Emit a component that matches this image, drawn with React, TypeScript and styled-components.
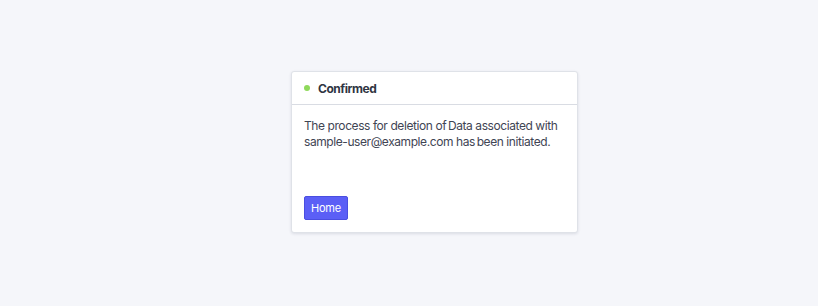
import React from "react";
import styled, { createGlobalStyle } from "styled-components";

const Global = createGlobalStyle`
  html, body { margin: 0; padding: 0; background: #f5f6fa; }
  body { font-family: Inter, "Noto Sans", sans-serif; }
`;

const Page = styled.div`
  height: 306px;
  display: flex;
  align-items: flex-start;
  padding: 71px 0 0 291px;
  box-sizing: border-box;
`;

const Card = styled.div`
  width: 287px;
  height: 162px;
  box-sizing: border-box;
  background: #fff;
  border: 1px solid #dfe2e8;
  border-radius: 3px;
  box-shadow: 0 1px 3px rgba(30, 40, 70, 0.12);
  display: flex;
  flex-direction: column;
`;

const Header = styled.div`
  height: 32px;
  display: flex;
  align-items: center;
  gap: 8px;
  padding-left: 12px;
  border-bottom: 1px solid #d9dce3;
`;

const Dot = styled.span`
  width: 6px;
  height: 6px;
  border-radius: 50%;
  background: #8fd95b;
`;

const Title = styled.span`
  font-size: 12px;
  font-weight: 700;
  letter-spacing: -0.45px;
  color: #2f3542;
`;

const Body = styled.div`
  flex: 1;
  padding: 13px 12px 12px 12px;
  display: flex;
  flex-direction: column;
  justify-content: space-between;
`;

const Text = styled.p`
  margin: 0;
  font-size: 12px;
  line-height: 16px;
  letter-spacing: -0.42px;
  color: #3f4554;
`;

const Button = styled.button`
  align-self: flex-start;
  width: 44px;
  height: 24px;
  padding: 0;
  background: #5b5ff6;
  color: #fff;
  border: 1px solid #4a4ee0;
  border-radius: 2px;
  font-family: Inter, "Noto Sans", sans-serif;
  font-size: 11px;
  letter-spacing: -0.2px;
  cursor: pointer;
`;

export default function App() {
  return (
    <>
      <Global />
      <Page>
        <Card>
          <Header>
            <Dot />
            <Title>Confirmed</Title>
          </Header>
          <Body>
            <Text>
              {"The process for deletion of\u2009Data associated with sample-user@example.com has\u2009been initiated."}
            </Text>
            <Button>Home</Button>
          </Body>
        </Card>
      </Page>
    </>
  );
}
